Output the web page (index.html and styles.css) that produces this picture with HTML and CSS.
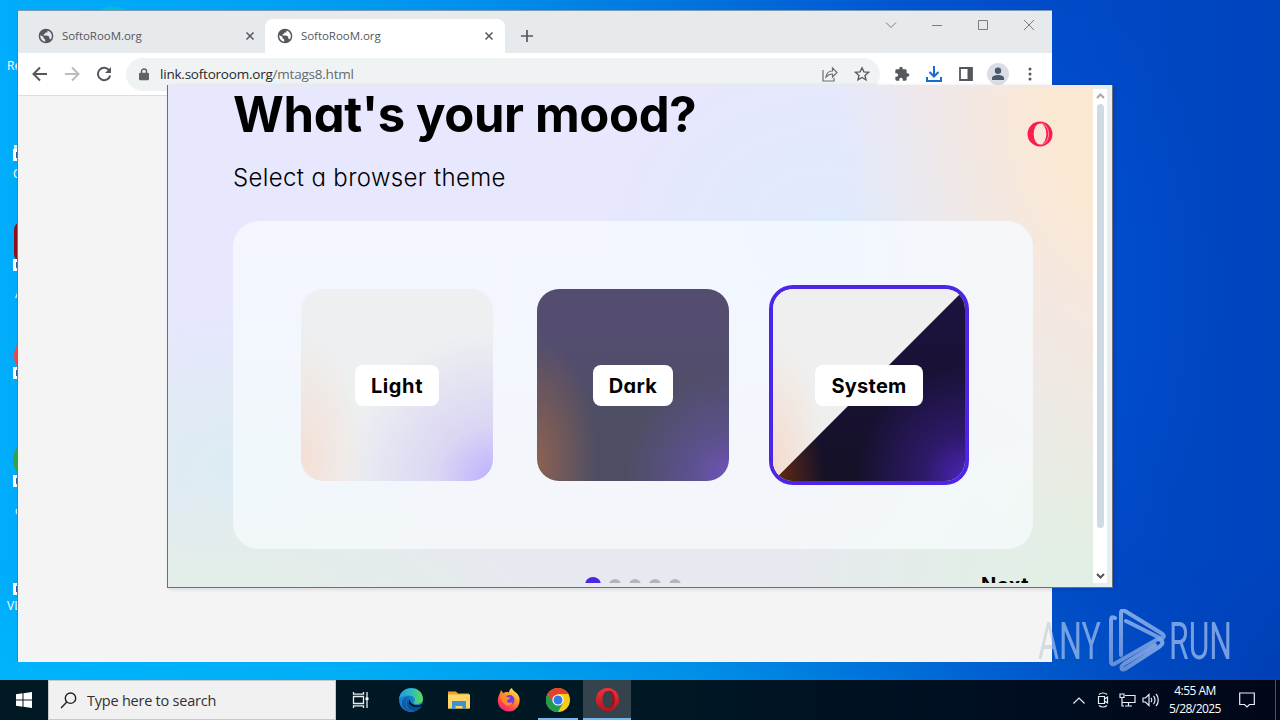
FILE: index.html
```
<!DOCTYPE html>
<html lang="en">
<head>
    <meta charset="UTF-8">
    <title>Desktop</title>
    <link rel="stylesheet" href="styles.css">
</head>
<body>
    <svg class="defs" width="0" height="0">
        <symbol id="globe" viewBox="0 0 24 24">
            <path fill="currentColor" d="M12 1a11 11 0 1 0 0 22a11 11 0 0 0 0-22zm-1.200 19.600A8.700 8.700 0 0 1 3.400 11l4.800 2v2.400l2.600 1.800zm8.300-3.500c-.5-1-1.200-1.400-2.300-1.400v-2.900l-3.600-1.600H8.500V8.900h2.300V6.600h3.400V3.700a8.700 8.700 0 0 1 4.900 13.400z"/>
        </symbol>
        <symbol id="cross" viewBox="0 0 10 10">
            <path d="M1.500 1.500l7 7M8.500 1.500l-7 7" fill="none" stroke="currentColor" stroke-width="1.500"/>
        </symbol>
    </svg>

    <div class="desktop">
        <!-- desktop icons, mostly covered by the browser -->
        <div class="shortcut" style="top: 20px"><p>Recycle Bin</p></div>
        <div class="shortcut" style="top: 128px"><i class="acrobat-tip"></i><b></b><p class="ccleaner">CCleaner</p></div>
        <div class="shortcut" style="top: 220px"><i class="acrobat"></i><b class="low"></b><p class="far">Acrobat</p></div>
        <div class="shortcut" style="top: 336px"><i class="red"></i><b class="mid"></b></div>
        <div class="shortcut" style="top: 444px"><i class="green"></i><b class="mid"></b><p class="chrome-name">oogle</p></div>
        <div class="shortcut" style="top: 564px"><b class="vlc-link"></b><p class="vlc">VLC media</p></div>
        <div class="peek"></div>

        <div class="chrome">
            <div class="tabs">
                <div class="tab">
                    <svg width="16" height="16"><use href="#globe"/></svg>
                    <span>SoftoRooM.org</span>
                    <svg class="close" width="10" height="10"><use href="#cross"/></svg>
                </div>
                <div class="tab active">
                    <svg width="16" height="16"><use href="#globe"/></svg>
                    <span>SoftoRooM.org</span>
                    <svg class="close" width="10" height="10"><use href="#cross"/></svg>
                </div>
                <svg class="plus" width="12" height="12" viewBox="0 0 12 12"><path d="M6 0v12M0 6h12" stroke="#54575b" stroke-width="1.700"/></svg>
                <div class="controls">
                    <svg width="12" height="12" viewBox="0 0 12 12"><path d="M1 3.500l5 5 5-5"/></svg>
                    <svg width="12" height="12" viewBox="0 0 12 12"><path d="M1 6.500h10"/></svg>
                    <svg width="12" height="12" viewBox="0 0 12 12"><path d="M1.500 1.500h9v9h-9z"/></svg>
                    <svg width="12" height="12" viewBox="0 0 12 12"><path d="M1 1l10 10M11 1L1 11"/></svg>
                </div>
            </div>
            <div class="toolbar">
                <svg class="back" width="16" height="16" viewBox="0 0 16 16"><path d="M15 8H2M8 1.500L1.500 8 8 14.500" fill="none" stroke="#54575b" stroke-width="2"/></svg>
                <svg class="forward" width="16" height="16" viewBox="0 0 16 16"><path d="M1 8h13M8 1.500L14.500 8 8 14.500" fill="none" stroke="#babcbe" stroke-width="2"/></svg>
                <svg class="reload" width="16" height="16" viewBox="0 0 16 16"><path d="M13.300 4.500A6.200 6.200 0 1 0 14.200 9.500" fill="none" stroke="#54575b" stroke-width="2"/><path d="M15 1v6H9z" fill="#54575b"/></svg>
                <div class="address">
                    <svg class="lock" width="10" height="13" viewBox="0 0 10 13"><path d="M2.500 6V3.500a2.500 2.500 0 0 1 5 0V6" fill="none" stroke="#5f6368" stroke-width="1.500"/><rect y="4.800" width="10" height="7.500" rx="1.200" fill="#5f6368"/></svg>
                    <span class="url">link.softoroom.org<em>/mtags8.html</em></span>
                    <svg class="share" width="16" height="16" viewBox="0 0 16 16" fill="none" stroke="#6b6e72" stroke-width="1.200"><path d="M1 4v11h11v-3"/><path d="M4 11c.5-4 3-6 6.500-6V2l4.500 4.500-4.500 4.500V8C8 8 6 8.800 4 11z"/></svg>
                    <svg class="star" width="16" height="16" viewBox="0 0 16 16"><path d="M8 1.800l1.900 4.100 4.500.5-3.400 3 1 4.500-4-2.400-4 2.400 1-4.500-3.400-3 4.500-.5z" fill="none" stroke="#5b5e62" stroke-width="1.400"/></svg>
                </div>
                <div class="tools">
                    <svg width="16" height="16" viewBox="0 0 24 24"><path fill="#54575b" d="M20.500 11H19V7a2 2 0 0 0-2-2h-4V3.500a2.500 2.500 0 0 0-5 0V5H4a2 2 0 0 0-2 2v3.800h1.500a2.700 2.700 0 0 1 0 5.400H2V20c0 1.100.9 2 2 2h3.800v-1.500a2.700 2.700 0 0 1 5.400 0V22H17a2 2 0 0 0 2-2v-4h1.500a2.500 2.500 0 0 0 0-5z"/></svg>
                    <svg class="download" width="16" height="16" viewBox="0 0 16 16" fill="none" stroke="#1a6ad4" stroke-width="2"><path d="M8 0v10M3.500 6L8 10.500 12.500 6M1 11v4h14v-4"/></svg>
                    <svg class="side" width="14" height="14" viewBox="0 0 14 14"><path d="M1 1h12v12H1z" fill="none" stroke="#54575b" stroke-width="1.800"/><path d="M8.500 1H13v12H8.500z" fill="#54575b"/></svg>
                    <svg class="avatar" width="22" height="22" viewBox="0 0 22 22"><circle cx="11" cy="11" r="11" fill="#dadde3"/><circle cx="11" cy="7.800" r="3.200" fill="#4b586c"/><path d="M5 17v-2c0-4 12-4 12 0v2z" fill="#4b586c"/></svg>
                    <svg class="menu" width="4" height="14" viewBox="0 0 4 14" fill="#54575b"><circle cx="2" cy="2" r="1.500"/><circle cx="2" cy="7" r="1.500"/><circle cx="2" cy="12" r="1.500"/></svg>
                </div>
            </div>
            <div class="page"></div>
        </div>

        <svg class="watermark" width="200" height="64" viewBox="0 0 200 64">
            <defs>
                <linearGradient id="wm" x2="0" y2="1"><stop offset="0" stop-color="#89b2ef"/><stop offset="1" stop-color="#7195da"/></linearGradient>
                <linearGradient id="wm-left" gradientUnits="userSpaceOnUse" x1="0" x2="34" y1="0" y2="0"><stop offset=".5" stop-color="#d3d8e0"/><stop offset=".51" stop-color="#83a9e8"/></linearGradient>
            </defs>
            <g class="letters">
                <text class="any" x="3" y="50" textLength="63" lengthAdjust="spacingAndGlyphs">ANY</text>
                <text x="134" y="50" textLength="63" lengthAdjust="spacingAndGlyphs">RUN</text>
            </g>
            <g fill="none" stroke="url(#wm)" stroke-width="4" stroke-linejoin="round" stroke-linecap="round">
                <path d="M80 9c-4-2-4 0-4 3v40c0 4 2 4 5 2l42-24M86 46V4c0-3 2-3 4-2l36 22c5 3 2 6-1 5L91 12"/>
                <path d="M124 30c6 3 3 6 0 8L90 60c-4 2-5-2-1-5l31-19"/>
            </g>
        </svg>

        <div class="opera">
            <div class="view">
                <div class="welcome">
                    <h1>What's your mood?</h1>
                    <h2>Select a browser theme</h2>
                    <div class="themes">
                        <div class="theme light"><span>Light</span></div>
                        <div class="theme dark"><span>Dark</span></div>
                        <div class="theme system"><span>System</span></div>
                    </div>
                    <div class="footer">
                        <div class="dots"><i class="on"></i><i></i><i></i><i></i><i></i></div>
                        <span class="next">Next</span>
                    </div>
                </div>
                <svg class="logo" width="26" height="26" viewBox="0 0 26 26"><circle cx="13" cy="13" r="12.500" fill="#fb1d4e"/><ellipse cx="13" cy="13" rx="6.300" ry="10.500" fill="#f7e7da"/><path d="M14 2.500c10 1 10 20 0 21" fill="none" stroke="#f7e7da" stroke-width=".6"/></svg>
                <div class="scrollbar">
                    <svg width="9" height="6" viewBox="0 0 9 6"><path d="M1 5l3.500-3.500L8 5" fill="none" stroke="#a5a7aa" stroke-width="2"/></svg>
                    <div class="thumb"></div>
                    <svg width="9" height="6" viewBox="0 0 9 6"><path d="M1 1l3.500 3.500L8 1" fill="none" stroke="#505357" stroke-width="2"/></svg>
                </div>
            </div>
        </div>

        <div class="taskbar">
            <div class="start"><svg width="16" height="16" viewBox="0 0 16 16" fill="#fff"><path d="M0 2.200L6.500 1.300v6.200H0zM7.500 1.200L16 0v7.500H7.500zM0 8.500h6.500v6.200L0 13.800zM7.500 8.500H16V16l-8.500-1.200z"/></svg></div>
            <div class="search">
                <svg width="17" height="17" viewBox="0 0 17 17"><g fill="none" stroke="#222" stroke-width="1.400"><circle cx="10.500" cy="6.200" r="5.200"/><path d="M6.800 10L1 16"/></g></svg>
                Type here to search
            </div>
            <div class="apps">
                <div class="app"><svg width="18" height="18" viewBox="0 0 18 18" fill="none" stroke="#e8edf0" stroke-width="1.300"><path d="M1.500 5.500h10v7h-10zM1.500 1v2.200h10V1M1.500 17v-2.200h10V17M15 1v16"/><path d="M13.500 6.500h3v2.500h-3z" fill="#fff" stroke="none"/></svg></div>
                <div class="app edge"><svg width="26" height="26" viewBox="0 0 24 24">
                    <defs><linearGradient id="e1"><stop offset="0" stop-color="#1b9de2"/><stop offset=".6" stop-color="#35c1b1"/><stop offset="1" stop-color="#66d84d"/></linearGradient></defs>
                    <circle cx="12" cy="12" r="11" fill="#1681d2"/><path d="M1 11C2-2 22-2 23 10c.5 5-5 7-9 5 3-3 1-7-3-7-4-.3-8 .5-10 3z" fill="url(#e1)"/><path d="M11 9c-6 1-5 13 4 14-8 1-13-5-11-10 1-3 4-4.500 7-4z" fill="#115ca8"/><path d="M11 9.500c-3 2-2 8 4 9 3 .5 5 0 7-1-3 6-13 7-14-2 0-3 1-5 3-6z" fill="#0b5094"/><path d="M12 10c-2 1.500-1 5 3 6.500 2 .8 5 .6 7-1l1 2-4 1c-5 1-10-2-9-6z" fill="#001823"/></svg></div>
                <div class="app"><svg width="22" height="20" viewBox="0 0 22 20"><path d="M0 1.500h8l2 2h11v15H0z" fill="#e9a82c"/><path d="M0 4.500h22v14H0z" fill="#ffd667"/><path d="M4 11h14v8h-3.500v-3h-7v3H4z" fill="#3f91cf"/></svg></div>
                <div class="app firefox"><svg width="24" height="24" viewBox="0 0 24 24">
                    <defs><linearGradient id="f1" x1=".8" y1="0" x2=".2" y2="1"><stop offset="0" stop-color="#fff04d"/><stop offset=".4" stop-color="#ff9429"/><stop offset=".75" stop-color="#ff3d53"/><stop offset="1" stop-color="#e12489"/></linearGradient></defs>
                    <path d="M3 5l1-3 2 3 3-1c1 0 2 0 3 .5 0-2 1-3.500 3-4.500 0 3 6 4 7.500 10 1 7-3.500 13.500-10.500 13.500S.5 18.500.8 12C1 9 2 7 3 5z" fill="url(#f1)"/><circle cx="12.500" cy="12" r="5" fill="#743ee1"/><path d="M4 8c3-1 5 0 6 1l3 .8c0 2-3 1.500-3 3.200 0 2 4 2.500 5.500.5C15 20 5 19 4 8z" fill="#ff8a2a"/></svg></div>
                <div class="app running"><svg width="24" height="24" viewBox="0 0 24 24"><circle cx="12" cy="12" r="12" fill="#fbc917"/><path d="M1.600 6A12 12 0 0 1 22.400 6H12L7 15z" fill="#e6402f"/><path d="M1.600 6A12 12 0 0 0 12 24l5-9-10-1z" fill="#229b50"/><circle cx="12" cy="12" r="5.600" fill="#fff"/><circle cx="12" cy="12" r="4.500" fill="#2f7be9"/></svg></div>
                <div class="app running focused"><svg width="23" height="23" viewBox="0 0 23 23"><defs><linearGradient id="o1" x2="0" y2="1"><stop offset="0" stop-color="#f4323d"/><stop offset="1" stop-color="#b5121e"/></linearGradient></defs><path d="M11.500 0a11.500 11.500 0 1 0 0 23a11.500 11.500 0 0 0 0-23zM11.500 3c3 0 5 4 5 8.500s-2 8.500-5 8.500-5-4-5-8.500 2-8.500 5-8.500z" fill="url(#o1)" fill-rule="evenodd"/><path d="M12 3c6 2 6 15 0 17 9 2 9-19 0-17z" fill="#8d1420"/></svg></div>
            </div>
            <div class="tray">
                <svg class="up" width="12" height="7" viewBox="0 0 12 7"><path d="M.5 6.500L6 1l5.500 5.500"/></svg>
                <svg class="cam" width="12" height="16" viewBox="0 0 12 16"><path d="M2 2.500c2-2 6-2 8 0M2 13.500c2 2 6 2 8 0M1.500 4.500h6v7h-6zM7.500 7l3-2v6l-3-2"/></svg>
                <svg class="net" width="17" height="14" viewBox="0 0 17 14"><path d="M6 2.500h10v7H3.500M9.500 9.500V13M6 13h7M1 1h4v3.500H1zM3 4.500V13h2"/></svg>
                <svg class="sound" width="17" height="14" viewBox="0 0 17 14"><path d="M1 5h2.500L7 1.500v11L3.500 9H1zM9 5c1 1 1 3 0 4M11.500 3c2 2 2 6 0 8M14 1c3 3 3 9 0 12"/></svg>
                <div class="clock">4:55 AM<br>5/28/2025</div>
                <svg class="note" width="16" height="16" viewBox="0 0 16 16"><path d="M.7 1h14.600v11.500H10.500L8 15l-2.500-2.500H.7z"/></svg>
            </div>
        </div>
    </div>
</body>
</html>
```

FILE: styles.css
```
* {
    box-sizing: border-box;
}
body {
    margin: 0;
    font-family: "Open Sans", "Noto Sans", sans-serif;
}
svg {
    display: block;
    flex: none;
}
h1, h2, p {
    margin: 0;
}
.defs {
    position: absolute;
}
.desktop {
    position: relative;
    width: 1280px;
    height: 720px;
    overflow: hidden;
    background: radial-gradient(ellipse 170px 330px at 1052px 290px, rgba(0, 86, 220, 0.6), rgba(0, 80, 208, 0)), linear-gradient(90deg, #00acfb 0, #00a3f4 250px, #008fec 480px, #0075de 680px, #0055d0 900px, #0049c6 1060px, #0044be 1280px);
}
.desktop::before {
    content: "";
    position: absolute;
    top: 560px;
    left: 0;
    width: 1280px;
    height: 120px;
    background: linear-gradient(90deg, #00b4fb 0, #00aff6 350px, #0091e8 700px, #0067d3 960px, #0049c0 1150px, #003fb5 1280px);
    mask-image: linear-gradient(transparent, #000);
}

/* desktop shortcuts */
.shortcut {
    position: absolute;
    left: 0;
    width: 76px;
    height: 100px;
    color: #fff;
    font-size: 12px;
}
.shortcut p {
    position: absolute;
    top: 37px;
    left: 7px;
    white-space: nowrap;
}
.shortcut b {
    position: absolute;
    top: 21px;
    left: 13px;
    width: 12px;
    height: 12px;
    background: #fff;
    border: 3px solid #fff;
    box-shadow: inset 0 0 0 5px #315b94;
}
.shortcut b.low {
    top: 39px;
}
.shortcut b.mid {
    top: 31px;
}
.shortcut b.vlc-link {
    top: 19px;
}
.shortcut i {
    position: absolute;
    top: 5px;
    left: 13px;
    width: 40px;
    height: 40px;
    border-radius: 50%;
}
.shortcut .acrobat-tip {
    top: 17px;
    left: 14px;
    height: 4px;
    border-radius: 0;
    background: #d9eaf5;
}
.shortcut .acrobat {
    top: 2px;
    left: 14px;
    border-radius: 8px;
    background: #8e1119;
}
.shortcut .red {
    top: 0;
    left: 14px;
    background: #ef4650;
}
.shortcut .green {
    top: -4px;
    background: #31a34d;
}
.shortcut p.ccleaner {
    left: 13px;
}
.shortcut p.far {
    top: 65px;
    left: 15px;
}
.shortcut p.chrome-name {
    top: 58px;
    left: 15px;
}
.shortcut p.vlc {
    top: 33px;
}
.peek {
    position: absolute;
    top: 6px;
    left: 97px;
    width: 32px;
    height: 24px;
    border-radius: 50%;
    background: #00bbdd;
}

/* chrome window */
.chrome {
    position: absolute;
    top: 10px;
    left: 17px;
    width: 1035px;
    height: 652px;
    display: flex;
    flex-direction: column;
    background: #f4f4f4;
    border-top: 1px solid #7d9ab3;
    border-left: 1px solid #3d83ae;
}
.tabs {
    height: 42px;
    display: flex;
    align-items: flex-end;
    padding-left: 8px;
    background: #e7eaed;
}
.tab {
    width: 239px;
    height: 34px;
    display: flex;
    align-items: center;
    padding: 0 10px 0 12px;
    color: #54575b;
    font-size: 12px;
}
.tab span {
    flex: 1;
    margin: -2px 0 0 8px;
    font-size: 11.5px;
    letter-spacing: -0.05px;
}
.tab.active {
    width: 240px;
    padding-right: 11px;
    border-radius: 8px 8px 0 0;
    background: #fff;
}
.plus {
    margin: 0 0 11px 16px;
}
.controls {
    display: flex;
    gap: 34px;
    margin: 0 17px 22px auto;
    fill: none;
    stroke: #7a7d80;
}
.toolbar {
    height: 43px;
    display: flex;
    align-items: center;
    padding-left: 14px;
    background: #fff;
    border-bottom: 1px solid #dcdddf;
}
.forward, .reload {
    margin-left: 16px;
}
.address {
    width: 754px;
    height: 33px;
    display: flex;
    align-items: center;
    margin-left: 14px;
    padding: 0 10px 0 13px;
    border-radius: 17px;
    background: #f0f3f4;
}
.url {
    flex: 1;
    margin-left: 11px;
    color: #25282b;
    font-size: 13.5px;
    letter-spacing: -0.22px;
}
.url em {
    color: #666a6e;
    font-style: normal;
}
.share {
    margin-right: 16px;
}
.tools {
    flex: 1;
    display: flex;
    align-items: center;
    padding-left: 14px;
}
.download {
    margin-left: 16px;
}
.side {
    margin-left: 17px;
}
.avatar {
    margin-left: 14px;
}
.menu {
    margin-left: 19px;
}

/* opera setup window */
.opera {
    position: absolute;
    top: 85px;
    left: 167px;
    width: 946px;
    height: 503px;
    padding: 4px;
    background: #e8edf0;
    border: 1px solid #6c7076;
    border-top: 0;
    box-shadow: 2px 1px 4px rgba(0, 20, 70, 0.15);
}
.opera::before {
    content: "";
    position: absolute;
    inset: 0 18px 0 0;
}
.opera::before, .view {
    background: radial-gradient(ellipse 290px 480px at 102% 0, #fbe8d2 25%, rgba(251, 232, 210, 0) 100%), radial-gradient(ellipse 330px 330px at 99% 105%, #e2efe5 20%, rgba(226, 239, 229, 0) 100%), radial-gradient(ellipse 220px 170px at 70% 28%, #dfebfc, rgba(223, 235, 252, 0)), radial-gradient(ellipse 340px 120px at 4% 105%, #e3eee7 20%, rgba(227, 238, 231, 0) 100%), radial-gradient(ellipse 240px 150px at 7% 76%, #dcecf3, rgba(220, 236, 243, 0)), linear-gradient(#e7e7fe 45%, #e7e9f0 95%);
}
.opera::before {
    opacity: 0.75;
}
.view {
    position: relative;
    width: 935px;
    height: 494px;
    display: flex;
    overflow: hidden;
}
.welcome {
    width: 861px;
    flex: none;
    padding-left: 61px;
    color: #000;
    font-family: Inter, sans-serif;
    font-feature-settings: "cv11";
}
.welcome h1 {
    height: 72px;
    font-size: 49px;
    line-height: 52px;
    letter-spacing: -0.35px;
    white-space: nowrap;
}
.welcome h2 {
    height: 60px;
    font-size: 24px;
    font-weight: 300;
    line-height: 33px;
    letter-spacing: 0.36px;
}
.themes {
    width: 800px;
    height: 328px;
    display: flex;
    align-items: center;
    justify-content: center;
    gap: 44px;
    border-radius: 26px;
    background: linear-gradient(rgba(246, 250, 255, 0.8), rgba(248, 252, 253, 0.7));
}
.theme {
    width: 192px;
    height: 192px;
    display: flex;
    align-items: center;
    justify-content: center;
    border-radius: 22px;
}
.theme span {
    padding: 9px 16px 7px;
    border-radius: 8px;
    background: #fff;
    color: #000;
    font-size: 20px;
    font-weight: 700;
    line-height: 25px;
}
.light {
    background: radial-gradient(ellipse 65px 130px at 0 88%, #f4dfd5, rgba(247, 223, 209, 0)), radial-gradient(circle at 100% 100%, #bdafff 0, #dad6f3 56px, rgba(236, 236, 242, 0) 150px), #edf0f1;
}
.light span {
    letter-spacing: 0.6px;
}
.dark {
    background: radial-gradient(ellipse 60px 120px at 0 88%, #8d6152, rgba(141, 97, 82, 0)), radial-gradient(circle at 100% 98%, #7053b9 0, rgba(98, 82, 159, 0.7) 40px, rgba(85, 80, 120, 0) 105px), linear-gradient(#544d70 20%, #4d4e63 75%);
}
.dark span {
    letter-spacing: 0.4px;
}
.system {
    position: relative;
    border-radius: 20px;
    background: linear-gradient(135deg, #efefef 49.8%, rgba(0, 0, 0, 0) 50.2%), radial-gradient(ellipse 52px 90px at 0 100%, #6b2c12, rgba(70, 30, 20, 0)), radial-gradient(circle at 100% 98%, #4b24b8 0, rgba(57, 29, 136, 0.7) 40px, rgba(30, 20, 70, 0) 110px), linear-gradient(#1e1241, #141126);
    box-shadow: 0 0 0 4px #4d25e7;
}
.system::before {
    content: "";
    position: absolute;
    inset: 0;
    border-radius: 20px;
    background: radial-gradient(ellipse 52px 120px at 0 90%, #f4dccd, rgba(244, 220, 205, 0));
    clip-path: polygon(0 0, 100% 0, 0 100%);
}
.system span {
    position: relative;
    letter-spacing: 0.25px;
}
.footer {
    width: 796px;
    display: flex;
    justify-content: flex-end;
    padding-top: 24px;
}
.dots {
    display: flex;
    align-items: center;
    gap: 8px;
    height: 24px;
    margin-right: 300px;
}
.dots i {
    width: 12px;
    height: 12px;
    border-radius: 50%;
    background: #b1b4ba;
}
.dots .on {
    width: 16px;
    height: 16px;
    background: #4d25e7;
}
.next {
    font-size: 20px;
    font-weight: 700;
    line-height: 24px;
    letter-spacing: 0.5px;
}
.logo {
    position: absolute;
    top: 32px;
    left: 855px;
}
.scrollbar {
    width: 15px;
    flex: none;
    display: flex;
    flex-direction: column;
    align-items: center;
    margin-left: 60px;
    padding: 4px 0;
    background: #fff;
}
.thumb {
    width: 7px;
    height: 424px;
    margin: 5px 0 auto;
    border-radius: 4px;
    background: #cedbe5;
}

/* watermark */
.watermark {
    position: absolute;
    top: 609px;
    left: 1035px;
    opacity: 0.9;
}
.letters {
    fill: #83a9e8;
    font-family: Roboto, sans-serif;
    font-size: 52px;
    font-weight: 400;
}
.letters .any {
    fill: url(#wm-left);
}

/* taskbar */
.taskbar {
    position: absolute;
    top: 680px;
    left: 0;
    width: 1280px;
    height: 40px;
    display: flex;
    background: linear-gradient(90deg, #001923, #001824 50%, #000d21 80%, #010717);
}
.start {
    width: 48px;
    display: flex;
    align-items: center;
    justify-content: center;
}
.search {
    width: 288px;
    display: flex;
    align-items: center;
    gap: 10px;
    padding-left: 11px;
    background: #f1f1f1;
    border: 1px solid #c5c8ca;
    color: #303030;
    font-size: 14.5px;
    letter-spacing: -0.23px;
}
.apps {
    display: flex;
}
.app {
    width: 49px;
    display: flex;
    align-items: center;
    justify-content: center;
}
.edge, .firefox {
    padding-left: 2px;
}
.running {
    border-bottom: 2px solid #78b8ed;
    width: 40px;
    margin-left: 6px;
    padding-top: 1px;
}
.running.focused {
    width: 48px;
    margin-left: 5px;
    background: #35434c;
}
.tray {
    width: 207px;
    height: 40px;
    display: flex;
    align-items: center;
    margin-left: auto;
    fill: none;
    stroke: #e9eef5;
    stroke-width: 1.2;
}
.cam {
    margin-left: 12px;
}
.net {
    margin-left: 10px;
}
.sound {
    margin-left: 6px;
}
.clock {
    width: 58px;
    margin-left: 7px;
    color: #fff;
    font-size: 12px;
    line-height: 18px;
    letter-spacing: -0.55px;
    text-align: center;
    white-space: nowrap;
}
.note {
    margin-left: 15px;
}
.tray::after {
    content: "";
    width: 1px;
    height: 40px;
    margin-left: 20px;
    background: #4b5261;
}
```
